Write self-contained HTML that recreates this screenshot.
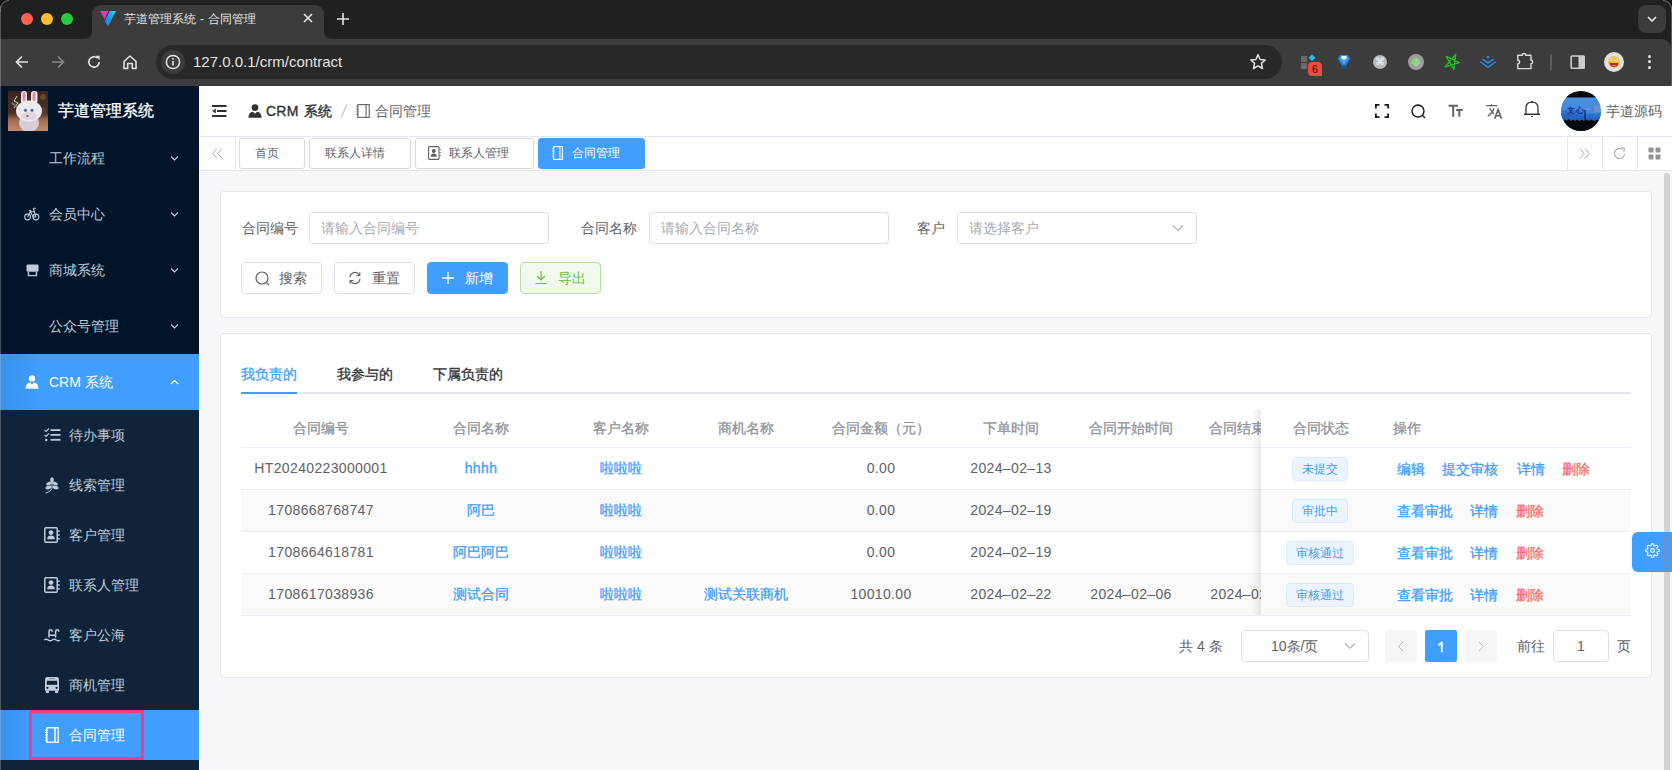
<!DOCTYPE html>
<html><head><meta charset="utf-8">
<style>
*{box-sizing:border-box;margin:0;padding:0}
html,body{width:1672px;height:770px;overflow:hidden;background:#f5f7f9;font-family:"Liberation Sans",sans-serif;position:relative}
.a{position:absolute}
/* browser chrome */
#tabstrip{left:0;top:0;width:1672px;height:39px;background:#1f2020}
#toolbar{left:0;top:39px;width:1672px;height:47px;background:#3c3c3c}
.dot{width:12px;height:12px;border-radius:50%;top:13px}
#tab{left:92px;top:5px;width:232px;height:34px;background:#3c3c3c;border-radius:9px 9px 0 0}
#omni{left:156px;top:45px;width:1126px;height:34px;border-radius:17px;background:#282828}
.ctext{color:#e3e3e3}
/* sidebar */
#sidebar{left:0;top:86px;width:199px;height:684px;background:#001529;overflow:hidden}
.mi{left:0;width:200px;height:56px;color:#bfcbd9;font-size:14px;line-height:56px}
.mi span.t{position:absolute;left:49px;top:0}
.smi{left:0;width:200px;height:50px;color:#bfcbd9;font-size:14px;line-height:50px;background:#0f2438}
.smi span.t{position:absolute;left:69px;top:0}
/* header */
#header{left:199px;top:86px;width:1473px;height:51px;background:#fff;border-bottom:1px solid #e4e7ed}
#tags{left:199px;top:137px;width:1473px;height:34px;background:#fff;border-bottom:1px solid #e4e7ed}
.tag{top:1px;height:31px;border:1px solid #d9d9d9;border-radius:3px;font-size:12px;color:#606266;line-height:28px;background:#fff}
.card{background:#fff;border:1px solid #e4e7ed;border-radius:4px}
.lbl{font-size:14px;color:#606266;line-height:32px}
.inp{height:32px;border:1px solid #dcdfe6;border-radius:4px;font-size:14px;color:#a8abb2;line-height:30px;padding-left:11px;background:#fff}
.btn{height:32px;border:1px solid #dcdfe6;border-radius:4px;font-size:14px;color:#606266;line-height:30px;background:#fff;font-weight:500}
.th{top:409px;height:38px;line-height:38px;font-size:14px;color:#909399;font-weight:500;text-align:center;-webkit-text-stroke:0.3px #909399}
.row{left:241px;width:1390px;height:42px;border-bottom:1px solid #ebeef5}
.td{height:41px;line-height:41px;font-size:14px;color:#606266;text-align:center}
.lnk{color:#409eff;-webkit-text-stroke:0.3px #409eff}
.del{color:#f56c6c;-webkit-text-stroke:0.3px #f56c6c}
.stag{height:24px;line-height:22px;font-size:12px;color:#409eff;background:#ecf5ff;border:1px solid #d9ecff;border-radius:4px;text-align:center}
</style></head>
<body>
<!-- ============ BROWSER CHROME ============ -->
<div id="tabstrip" class="a"></div>
<div id="toolbar" class="a"></div>
<div class="a dot" style="left:21px;background:#fe5f57"></div>
<div class="a dot" style="left:41px;background:#febc2e"></div>
<div class="a dot" style="left:61px;background:#28c840"></div>
<div id="tab" class="a"></div>
<svg class="a" style="left:84px;top:29px" width="8" height="10"><path d="M0 10 Q8 10 8 2 L8 10 Z" fill="#3c3c3c"/></svg>
<svg class="a" style="left:324px;top:29px" width="8" height="10"><path d="M8 10 Q0 10 0 2 L0 10 Z" fill="#3c3c3c"/></svg>
<svg class="a" style="left:100px;top:11px" width="17" height="17" viewBox="0 0 17 17"><defs><linearGradient id="fv" x1="0" y1="1" x2="1" y2="0"><stop offset="0" stop-color="#1c7fe6"/><stop offset="0.5" stop-color="#1a9bef"/><stop offset="1" stop-color="#17dcf7"/></linearGradient></defs><path d="M0 0 H8.3 L4.6 8.2 Z" fill="#e83ab8"/><path d="M9.7 0 H16 L8 15.6 L4.9 9.9 Z" fill="url(#fv)"/></svg>
<div class="a ctext" style="left:124px;top:10px;font-size:12px;line-height:18px;letter-spacing:0.1px">芋道管理系统 - 合同管理</div>
<svg class="a" style="left:303px;top:13px" width="10" height="10"><path d="M1 1 L9 9 M9 1 L1 9" stroke="#e3e3e3" stroke-width="1.6"/></svg>
<svg class="a" style="left:337px;top:13px" width="12" height="12"><path d="M6 0 V12 M0 6 H12" stroke="#e3e3e3" stroke-width="1.6"/></svg>
<svg class="a" style="left:15px;top:55px" width="14" height="14" viewBox="0 0 14 14"><path d="M13 7 H2 M7 1.5 L1.5 7 L7 12.5" stroke="#e3e3e3" stroke-width="1.7" fill="none"/></svg>
<svg class="a" style="left:51px;top:55px" width="14" height="14" viewBox="0 0 14 14"><path d="M1 7 H12 M7 1.5 L12.5 7 L7 12.5" stroke="#8a8a8a" stroke-width="1.7" fill="none"/></svg>
<svg class="a" style="left:87px;top:55px" width="14" height="14" viewBox="0 0 14 14"><path d="M12.2 7 A5.2 5.2 0 1 1 10.6 3.2" stroke="#e3e3e3" stroke-width="1.7" fill="none"/><path d="M8.3 0.8 L12.6 0.8 L12.6 5.1 Z" fill="#e3e3e3"/></svg>
<svg class="a" style="left:122px;top:54px" width="16" height="16" viewBox="0 0 16 16"><path d="M2 7.5 L8 2 L14 7.5 V14.5 H10.3 V9.5 H5.7 V14.5 H2 Z" stroke="#e3e3e3" stroke-width="1.6" fill="none" stroke-linejoin="round"/></svg>

<div id="omni" class="a"></div>
<div class="a ctext" style="left:193px;top:52px;font-size:15px;line-height:20px">127.0.0.1/crm/contract</div>
<div class="a" style="left:161px;top:50px;width:24px;height:24px;border-radius:50%;background:#3c3c3c"></div>
<svg class="a" style="left:165px;top:54px" width="16" height="16" viewBox="0 0 16 16"><circle cx="8" cy="8" r="6.6" stroke="#e3e3e3" stroke-width="1.5" fill="none"/><rect x="7.2" y="7" width="1.6" height="4.6" fill="#e3e3e3"/><circle cx="8" cy="4.9" r="0.95" fill="#e3e3e3"/></svg>
<svg class="a" style="left:1249px;top:53px" width="18" height="18" viewBox="0 0 18 18"><path d="M9 1.8 L11.1 6.5 L16.2 7 L12.4 10.4 L13.5 15.5 L9 12.9 L4.5 15.5 L5.6 10.4 L1.8 7 L6.9 6.5 Z" stroke="#e3e3e3" stroke-width="1.5" fill="none" stroke-linejoin="round"/></svg>


<!-- EXTENSIONS -->
<div class="a" style="left:1301px;top:56px;width:6px;height:5.5px;background:#6a6a6a;border-radius:1px"></div>
<div class="a" style="left:1301px;top:63px;width:6px;height:5.5px;background:#6a6a6a;border-radius:1px"></div>
<svg class="a" style="left:1308px;top:54px" width="8" height="8"><path d="M4 0.5 L7.5 3.8 L4 7 L0.5 3.8 Z" fill="#19c2f5"/></svg>
<div class="a" style="left:1308px;top:62px;width:14px;height:14px;background:#ee4b3a;border-radius:4px 4px 0 4px;color:#1a1a1a;font-size:10.5px;line-height:15px;text-align:center">6</div>
<svg class="a" style="left:1337px;top:54px" width="14" height="16" viewBox="0 0 14 16"><path d="M3 1 H11 L13.5 4.5 L7 15.5 L0.5 4.5 Z" fill="#1f6fd6"/><path d="M4 1.5 H10 L12 4.5 L7 11 L2 4.5 Z" fill="#4aa3f5"/><path d="M5 2 H9 L10 4 L7 6 L4 4 Z" fill="#e6f4ff"/><path d="M7 11 L7 15.5" stroke="#0c3d80" stroke-width="1.2"/></svg>
<div class="a" style="left:1373px;top:55px;width:14px;height:14px;border-radius:50%;background:#b8b8b8;color:#f4f4f4;font-size:10px;line-height:14px;text-align:center">⌘</div>
<div class="a" style="left:1408px;top:54px;width:16px;height:16px;border-radius:50%;background:#9e9e9e"></div>
<div class="a" style="left:1412px;top:58px;width:8px;height:8px;border-radius:50%;background:#8fd48a"></div>
<svg class="a" style="left:1436px;top:48px" width="100" height="28" viewBox="0 0 100 28">
<path d="M19.7 6.3 L9 18.8 L23.6 14.6 L10.2 8.4 L17.9 21.5 Z" stroke="#1fc41f" stroke-width="1.3" fill="none" stroke-linejoin="round"/>
<circle cx="52" cy="9" r="1.3" fill="#2d8cf0"/>
<path d="M47.2 11.4 L52 15 L56.8 11.4" stroke="#2d8cf0" stroke-width="1.5" fill="none" stroke-linecap="round"/>
<path d="M44.6 14 L52 19.4 L59.5 14" stroke="#2d8cf0" stroke-width="1.5" fill="none" stroke-linecap="round"/>
<path d="M81.8 7.2 H86.3 A1.7 1.7 0 0 1 89.7 7.2 H95 V12.3 A1.7 1.7 0 0 1 95 15.7 V20.6 H81.8 V15.8 A1.8 1.8 0 0 0 81.8 12.2 Z" stroke="#dcdcdc" stroke-width="1.4" fill="none" stroke-linejoin="round"/>
</svg>
<div class="a" style="left:1550px;top:54px;width:2px;height:16px;background:#5c5c5c"></div>
<svg class="a" style="left:1570px;top:55px" width="16" height="14" viewBox="0 0 16 14"><rect x="1.2" y="1" width="13" height="12.2" rx="0.8" stroke="#cdcdcd" stroke-width="1.6" fill="none"/><rect x="8.5" y="1" width="5.8" height="12" fill="#cdcdcd"/></svg>
<div class="a" style="left:1604px;top:52px;width:20px;height:20px;border-radius:50%;background:#e0e0e0"></div>
<svg class="a" style="left:1607px;top:55px" width="14" height="14" viewBox="0 0 14 14"><circle cx="7" cy="7" r="6" fill="#f2c443"/><path d="M2.5 7.5 Q7 8.5 11.5 7.5 Q11 12 7 12 Q3 12 2.5 7.5 Z" fill="#c0262e"/><path d="M4.5 10 Q7 12.5 9.5 10" fill="#e87a8a"/><circle cx="5" cy="4.6" r="1.2" fill="#fff"/><circle cx="9.2" cy="4.6" r="1.2" fill="#fff"/><circle cx="5.2" cy="4.8" r="0.5" fill="#333"/><circle cx="9.0" cy="4.8" r="0.5" fill="#333"/></svg>
<div class="a" style="left:1648.2px;top:54.8px;width:3px;height:3px;border-radius:50%;background:#e3e3e3"></div>
<div class="a" style="left:1648.2px;top:60.3px;width:3px;height:3px;border-radius:50%;background:#e3e3e3"></div>
<div class="a" style="left:1648.2px;top:65.8px;width:3px;height:3px;border-radius:50%;background:#e3e3e3"></div>
<div class="a" style="left:1638px;top:5px;width:28px;height:28px;border-radius:8px;background:#3c3c3c"></div>
<svg class="a" style="left:1647px;top:15.5px" width="10" height="7"><path d="M1 1 L5 5 L9 1" stroke="#e3e3e3" stroke-width="1.7" fill="none"/></svg><svg class="a" style="left:1662px;top:39px" width="10" height="10"><path d="M10 0 H0 A9 9 0 0 1 9 9 H10 Z" fill="#1f2020"/></svg>

<!-- ============ SIDEBAR ============ -->
<div id="sidebar" class="a">
  <svg class="a" style="left:8px;top:5px" width="40" height="40" viewBox="0 0 40 40">
<defs><linearGradient id="flr" x1="0" y1="0" x2="0" y2="1"><stop offset="0" stop-color="#3a2620"/><stop offset="0.55" stop-color="#4a3026"/><stop offset="0.72" stop-color="#9c6b52"/><stop offset="1" stop-color="#c28c6a"/></linearGradient></defs>
<rect width="40" height="40" fill="url(#flr)"/>
<circle cx="35" cy="6" r="3" fill="#6a4632"/><circle cx="34" cy="20" r="4" fill="#5c3c2c"/>
<path d="M9 5 L6 10 L10 12 L6 17" stroke="#d8d8d8" stroke-width="1" fill="none"/>
<path d="M4 12 L9 16" stroke="#777" stroke-width="2"/>
<rect x="13" y="0" width="6" height="13" rx="3" fill="#eee"/><rect x="14.5" y="1" width="3" height="9" rx="1.5" fill="#e38fa0"/>
<rect x="23" y="0" width="6.5" height="13" rx="3" fill="#eee"/><rect x="24.5" y="1" width="3" height="9" rx="1.5" fill="#e38fa0"/>
<ellipse cx="21" cy="32" rx="10" ry="9" fill="#d8cdd2"/>
<ellipse cx="21" cy="20" rx="13" ry="10.5" fill="#eceaee"/>
<ellipse cx="21" cy="25" rx="8" ry="4" fill="#e2d6da"/>
<circle cx="17.5" cy="19.3" r="1.6" fill="#4a70b0"/><circle cx="24" cy="19.3" r="1.6" fill="#4a70b0"/>
<ellipse cx="19.5" cy="25" rx="1.2" ry="1" fill="#9c5a5a"/>
</svg>
  <div class="a" style="left:58px;top:14px;font-size:16px;font-weight:500;color:#fff;line-height:22px;-webkit-text-stroke:0.3px #fff">芋道管理系统</div>
  <div class="a mi" style="top:44px"><span class="t">工作流程</span></div>
  <div class="a mi" style="top:100px"><span class="t">会员中心</span></div>
  <div class="a mi" style="top:156px"><span class="t">商城系统</span></div>
  <div class="a mi" style="top:212px"><span class="t">公众号管理</span></div>
  <div class="a mi" style="top:268px;background:#409eff;color:#fff"><span class="t">CRM 系统</span></div>
  <div class="a smi" style="top:324px"><span class="t">待办事项</span></div>
  <div class="a smi" style="top:374px"><span class="t">线索管理</span></div>
  <div class="a smi" style="top:424px"><span class="t">客户管理</span></div>
  <div class="a smi" style="top:474px"><span class="t">联系人管理</span></div>
  <div class="a smi" style="top:524px"><span class="t">客户公海</span></div>
  <div class="a smi" style="top:574px"><span class="t">商机管理</span></div>
  <div class="a smi" style="top:624px;background:#409eff;color:#fff"><span class="t">合同管理</span></div>
  <div class="a smi" style="top:674px"></div>
<svg class="a" style="left:24px;top:121px" width="16" height="14" viewBox="0 0 16 14"><circle cx="3.6" cy="10" r="2.9" stroke="#bfcbd9" stroke-width="1.1" fill="none"/><circle cx="11.9" cy="10" r="2.9" stroke="#bfcbd9" stroke-width="1.1" fill="none"/><path d="M3.6 10 L6.3 4.8 L9.3 10 H11.9 M6.3 4.8 H10.4 L11.9 10 M10.4 4.8 L9.3 1.2 H11.6 M5 3.6 H7.3" stroke="#bfcbd9" stroke-width="1.1" fill="none" stroke-linejoin="round"/></svg>
<svg class="a" style="left:170px;top:124.5px" width="9" height="7"><path d="M1 1.5 L4.5 5 L8 1.5" stroke="#bfcbd9" stroke-width="1.1" fill="none"/></svg>
<svg class="a" style="left:25.5px;top:178px" width="13" height="13" viewBox="0 0 13 13"><path d="M1.5 0.5 H11.5 Q12.5 0.5 12.5 1.5 V6.5 Q12.5 7.8 11 7.8 H2 Q0.5 7.8 0.5 6.5 V1.5 Q0.5 0.5 1.5 0.5 Z" fill="#bfcbd9"/><path d="M2.5 8 V11.6 H10.5 V8" stroke="#bfcbd9" stroke-width="1.4" fill="none"/></svg>
<svg class="a" style="left:170px;top:180.5px" width="9" height="7"><path d="M1 1.5 L4.5 5 L8 1.5" stroke="#bfcbd9" stroke-width="1.1" fill="none"/></svg>
<svg class="a" style="left:170px;top:68.5px" width="9" height="7"><path d="M1 1.5 L4.5 5 L8 1.5" stroke="#bfcbd9" stroke-width="1.1" fill="none"/></svg>
<svg class="a" style="left:170px;top:236.5px" width="9" height="7"><path d="M1 1.5 L4.5 5 L8 1.5" stroke="#bfcbd9" stroke-width="1.1" fill="none"/></svg>
<svg class="a" style="left:25px;top:289px" width="14" height="14" viewBox="0 0 14 14"><circle cx="7" cy="3.5" r="3.2" fill="#fff"/><path d="M0.5 13.8 Q0.8 8.2 5 7.6 L7 9.6 L9 7.6 Q13.2 8.2 13.5 13.8 Z" fill="#fff"/></svg>
<svg class="a" style="left:170px;top:292.5px" width="9" height="7"><path d="M1 5 L4.5 1.5 L8 5" stroke="#fff" stroke-width="1.1" fill="none"/></svg>
<svg class="a" style="left:44px;top:342px" width="17" height="14" viewBox="0 0 17 14"><path d="M0.5 2 L2 3.5 L5 0.5 M0.5 6.8 L2 8.3 L5 5.3" stroke="#bfcbd9" stroke-width="1.2" fill="none"/><circle cx="2.2" cy="12" r="1.3" fill="#bfcbd9"/><rect x="6.5" y="1.2" width="10" height="1.8" fill="#bfcbd9"/><rect x="6.5" y="6" width="10" height="1.8" fill="#bfcbd9"/><rect x="6.5" y="10.9" width="10" height="1.8" fill="#bfcbd9"/></svg>
<svg class="a" style="left:45px;top:391px" width="14" height="17" viewBox="0 0 14 17"><ellipse cx="7" cy="2.8" rx="1.8" ry="2.6" fill="#bfcbd9"/><ellipse cx="4" cy="6.5" rx="3" ry="1.6" transform="rotate(-20 4 6.5)" fill="#bfcbd9"/><ellipse cx="10" cy="6.5" rx="3" ry="1.6" transform="rotate(20 10 6.5)" fill="#bfcbd9"/><ellipse cx="3.5" cy="10.5" rx="3.2" ry="1.7" transform="rotate(-15 3.5 10.5)" fill="#bfcbd9"/><ellipse cx="10.5" cy="10.5" rx="3.2" ry="1.7" transform="rotate(15 10.5 10.5)" fill="#bfcbd9"/><path d="M7 4 V11.5 Q6 14.5 0.5 16.2" stroke="#bfcbd9" stroke-width="1" fill="none"/></svg>
<svg class="a" style="left:44px;top:441px" width="16" height="16" viewBox="0 0 16 16"><rect x="0.8" y="0.8" width="12.4" height="14.4" rx="1" stroke="#bfcbd9" stroke-width="1.5" fill="none"/><circle cx="7" cy="5.6" r="2.4" fill="#bfcbd9"/><path d="M3.2 12.2 Q3.2 8.6 7 8.6 Q10.8 8.6 10.8 12.2 Z" fill="#bfcbd9"/><rect x="13.8" y="3.5" width="2" height="1.4" fill="#bfcbd9"/><rect x="13.8" y="7.3" width="2" height="1.4" fill="#bfcbd9"/><rect x="13.8" y="11.1" width="2" height="1.4" fill="#bfcbd9"/></svg>
<svg class="a" style="left:44px;top:491px" width="16" height="16" viewBox="0 0 16 16"><rect x="0.8" y="0.8" width="12.4" height="14.4" rx="1" stroke="#bfcbd9" stroke-width="1.5" fill="none"/><circle cx="7" cy="5.6" r="2.4" fill="#bfcbd9"/><path d="M3.2 12.2 Q3.2 8.6 7 8.6 Q10.8 8.6 10.8 12.2 Z" fill="#bfcbd9"/><rect x="13.8" y="3.5" width="2" height="1.4" fill="#bfcbd9"/><rect x="13.8" y="7.3" width="2" height="1.4" fill="#bfcbd9"/><rect x="13.8" y="11.1" width="2" height="1.4" fill="#bfcbd9"/></svg>
<svg class="a" style="left:40px;top:538px" width="24" height="22" viewBox="0 0 24 22"><path d="M9 13.5 V8 Q9 5.8 10.6 5.8 Q12.2 5.8 12.2 7.8 M15.6 13.5 V8 Q15.6 5.8 17.2 5.8 Q18.8 5.8 18.8 7.8 M9 11.2 H15.6" stroke="#bfcbd9" stroke-width="1.5" fill="none"/><path d="M4.2 16 Q6.2 14.6 8.2 16 Q10.2 17.4 12.2 16 Q14.2 14.6 16.2 16 Q18.2 17.4 20 16" stroke="#bfcbd9" stroke-width="1.5" fill="none"/></svg>
<svg class="a" style="left:40px;top:586px" width="24" height="26" viewBox="0 0 24 26"><path d="M7 5 H17 Q19 5 19 7.5 V18.8 H5 V7.5 Q5 5 7 5 Z" fill="#bfcbd9"/><rect x="6.8" y="8.8" width="10.4" height="4" fill="#112035"/><rect x="9" y="6.2" width="6" height="0.9" fill="#8090a0"/><circle cx="7.4" cy="15.8" r="1.1" fill="#112035"/><circle cx="16.6" cy="15.8" r="1.1" fill="#112035"/><path d="M5.8 18.5 H9 V20.2 Q9 21.2 7.4 21.2 Q5.8 21.2 5.8 20.2 Z M15 18.5 H18.2 V20.2 Q18.2 21.2 16.6 21.2 Q15 21.2 15 20.2 Z" fill="#bfcbd9"/></svg>
<svg class="a" style="left:45px;top:641px" width="14" height="16" viewBox="0 0 14 16"><rect x="1.8" y="0.8" width="11.4" height="14.4" stroke="#fff" stroke-width="1.3" fill="none"/><rect x="9.3" y="1" width="1.4" height="14" fill="#fff"/><path d="M0 3 H2.5 M0 5.5 H2.5 M0 8 H2.5 M0 10.5 H2.5 M0 13 H2.5" stroke="#fff" stroke-width="1"/></svg>
<div class="a" style="left:29px;top:624px;width:115px;height:50px;border:3px solid #f53d7a"></div>
<div class="a" style="left:0;top:268px;width:40px;height:56px;background:linear-gradient(to right,rgba(0,40,90,0.12),rgba(0,40,90,0))"></div>
<div class="a" style="left:0;top:624px;width:29px;height:50px;background:linear-gradient(to right,rgba(0,40,90,0.12),rgba(0,40,90,0.02))"></div>
</div>

<!-- ============ HEADER ============ -->
<div id="header" class="a"></div>
<div class="a" style="left:266px;top:100px;font-size:14px;line-height:22px;color:#303133;font-weight:500;-webkit-text-stroke:0.35px #303133;letter-spacing:0.25px;word-spacing:1px">CRM 系统</div>
<svg class="a" style="left:339px;top:103px" width="10" height="16"><path d="M7.8 1.5 L2.2 14.5" stroke="#c0c4cc" stroke-width="1.3"/></svg>
<div class="a" style="left:375px;top:100px;font-size:14px;line-height:22px;color:#606266">合同管理</div>
<div class="a" style="left:1606px;top:100px;font-size:14px;line-height:22px;color:#606266">芋道源码</div>

<!-- ============ TAGS VIEW ============ -->
<div id="tags" class="a">
  <div class="a tag" style="left:40px;width:66px;padding-left:15px">首页</div>
  <div class="a tag" style="left:110px;width:102px;padding-left:15px">联系人详情</div>
  <div class="a tag" style="left:216px;width:119px;padding-left:33px">联系人管理</div>
  <div class="a tag" style="left:339px;width:107px;padding-left:33px;background:#409eff;border-color:#409eff;color:#fff">合同管理</div>
</div>

<!-- header icons -->
<svg class="a" style="left:212px;top:105px" width="15" height="12" viewBox="0 0 15 12"><rect x="0" y="0" width="14.5" height="2" fill="#303133"/><rect x="5" y="5" width="9.5" height="2" fill="#303133"/><rect x="0" y="10" width="14.5" height="2" fill="#303133"/><path d="M0.3 6 L3.8 3.5 V8.5 Z" fill="#303133"/></svg>
<svg class="a" style="left:248px;top:104px" width="14" height="14" viewBox="0 0 14 14"><circle cx="7" cy="3.6" r="3.4" fill="#303133"/><path d="M0.3 13.8 Q0.6 8.3 5 7.7 L7 9.8 L9 7.7 Q13.4 8.3 13.7 13.8 Z" fill="#303133"/></svg>
<svg class="a" style="left:356px;top:104px" width="14" height="14" viewBox="0 0 14 14"><rect x="1.8" y="0.6" width="11.4" height="12.8" stroke="#606266" stroke-width="1.1" fill="none"/><rect x="9.5" y="0.8" width="1.1" height="12.5" fill="#606266"/><path d="M0.3 2.8 H2.6 M0.3 5.3 H2.6 M0.3 7.8 H2.6 M0.3 10.3 H2.6" stroke="#606266" stroke-width="0.9"/></svg>
<svg class="a" style="left:1375px;top:104px" width="14" height="14" viewBox="0 0 14 14"><path d="M0.9 4.5 V0.9 H4.5 M9.5 0.9 H13.1 V4.5 M13.1 9.5 V13.1 H9.5 M4.5 13.1 H0.9 V9.5" stroke="#1a1a1a" stroke-width="1.8" fill="none"/></svg>
<svg class="a" style="left:1411px;top:104px" width="15" height="15" viewBox="0 0 15 15"><circle cx="7" cy="7" r="6" stroke="#1a1a1a" stroke-width="1.4" fill="none"/><path d="M11.2 11.2 L14 14" stroke="#1a1a1a" stroke-width="1.4"/></svg>
<svg class="a" style="left:1446px;top:102px" width="20" height="18" viewBox="0 0 20 18"><path d="M2.5 3.7 H11.9 M7.2 3.7 V14.7 M10.2 7.9 H16.7 M13.3 7.9 V14.7" stroke="#606266" stroke-width="2" fill="none"/></svg>
<svg class="a" style="left:1484px;top:102px" width="20" height="18" viewBox="0 0 20 18"><path d="M2.2 3.6 H13.2 M7.6 2.2 V3.6 M5.6 6.2 L9.7 12.2 M10 6.2 Q8.5 11.5 3.7 14.1" stroke="#606266" stroke-width="1.3" fill="none"/><path d="M10.8 16.6 L14.1 7.6 L17.4 16.6 M11.8 13.8 H16.4" stroke="#606266" stroke-width="1.6" fill="none"/></svg>
<svg class="a" style="left:1522px;top:100px" width="20" height="19" viewBox="0 0 20 19"><path d="M4 14.2 V8 Q4 2.1 10 2.1 Q16 2.1 16 8 V14.2" stroke="#303133" stroke-width="1.3" fill="none"/><path d="M2 14.3 H18" stroke="#303133" stroke-width="1.5"/><circle cx="10" cy="2" r="1" fill="#303133"/><rect x="9.2" y="16" width="1.6" height="1" fill="#303133"/></svg>
<svg class="a" style="left:1561px;top:91px" width="40" height="40" viewBox="0 0 40 40">
<defs><clipPath id="avc"><circle cx="20" cy="20" r="20"/></clipPath><linearGradient id="avg" x1="0" y1="0" x2="0" y2="1"><stop offset="0" stop-color="#4d93e3"/><stop offset="0.6" stop-color="#3f86dc"/><stop offset="1" stop-color="#2a66c4"/></linearGradient></defs>
<g clip-path="url(#avc)">
<rect width="40" height="40" fill="url(#avg)"/>
<rect width="40" height="6.5" fill="#0a0a0c"/>
<path d="M0 20 Q10 17 20 21 Q30 25 40 21 V28 H0 Z" fill="#2f70cf"/>
<path d="M0 24 Q12 21 22 25 Q32 28 40 25 V30 H0 Z" fill="#2563c0"/>
<text x="5.5" y="21.5" font-size="7.5" font-weight="bold" fill="#1c2f86" font-family="Liberation Sans, sans-serif">文</text>
<text x="14.5" y="21.5" font-size="7.5" font-weight="bold" fill="#1c2f86" font-family="Liberation Sans, sans-serif">心</text>
<rect x="24" y="17.5" width="6" height="1" fill="#7a9ad0"/>
<rect x="33" y="14.5" width="6" height="7" fill="#6f8fc4"/>
<rect x="23.5" y="19" width="1.1" height="11" fill="#0c1a3a"/>
<path d="M0 31 L3 30.5 L4 28.5 L6 29.5 L8 28 L10 30 L12 28.5 L14 30 L16 28.5 L18 30 L21 28.8 L23 30 L26 28.5 L28 30 L30 28.5 L33 30 L36 28.8 L40 30 V40 H0 Z" fill="#08090f"/>
</g></svg>
<svg class="a" style="left:428px;top:146px" width="13" height="14" viewBox="0 0 13 14"><rect x="0.6" y="0.6" width="10.4" height="12.8" rx="1" stroke="#606266" stroke-width="1.1" fill="none"/><circle cx="5.8" cy="5" r="2" fill="#606266"/><path d="M2.8 10.8 Q2.8 7.6 5.8 7.6 Q8.8 7.6 8.8 10.8 Z" fill="#606266"/><path d="M11.5 3.5 H12.8 M11.5 6.5 H12.8 M11.5 9.5 H12.8" stroke="#606266" stroke-width="1"/></svg>
<svg class="a" style="left:552px;top:146px" width="11" height="14" viewBox="0 0 11 14"><rect x="1.6" y="0.6" width="8.8" height="12.8" stroke="#fff" stroke-width="1.1" fill="none"/><rect x="7.4" y="0.8" width="1" height="12.5" fill="#fff"/><path d="M0.2 2.8 H2.2 M0.2 5.3 H2.2 M0.2 7.8 H2.2 M0.2 10.3 H2.2" stroke="#fff" stroke-width="0.9"/></svg>
<svg class="a" style="left:212px;top:148px" width="11" height="11" viewBox="0 0 11 11"><path d="M5 0.5 L0.8 5.5 L5 10.5 M10 0.5 L5.8 5.5 L10 10.5" stroke="#a8abb2" stroke-width="1" fill="none"/></svg>
<div class="a" style="left:235px;top:137px;width:1px;height:33px;background:#e4e7ed"></div>
<div class="a" style="left:1567px;top:137px;width:1px;height:33px;background:#e4e7ed"></div>
<div class="a" style="left:1602px;top:137px;width:1px;height:33px;background:#e4e7ed"></div>
<div class="a" style="left:1637px;top:137px;width:1px;height:33px;background:#e4e7ed"></div>
<svg class="a" style="left:1579px;top:148px" width="11" height="11" viewBox="0 0 11 11"><path d="M1 0.5 L5.2 5.5 L1 10.5 M6 0.5 L10.2 5.5 L6 10.5" stroke="#a8abb2" stroke-width="1" fill="none"/></svg>
<svg class="a" style="left:1613px;top:147px" width="13" height="13" viewBox="0 0 13 13"><path d="M11.5 6.5 A5 5 0 1 1 9.5 2.5" stroke="#a8abb2" stroke-width="1.1" fill="none"/><path d="M7.8 0.8 L11.5 1.2 L10.8 4.8" stroke="#a8abb2" stroke-width="1.1" fill="none"/></svg>
<svg class="a" style="left:1648px;top:147px" width="13" height="13" viewBox="0 0 13 13"><rect x="0.5" y="0.5" width="5" height="5" rx="1" fill="#909399"/><rect x="7.5" y="0.5" width="5" height="5" rx="1" fill="#909399"/><rect x="0.5" y="7.5" width="5" height="5" rx="1" fill="#909399"/><rect x="7.5" y="7.5" width="5" height="5" rx="1" fill="#909399"/></svg>

<!-- ============ SEARCH CARD ============ -->
<div class="a card" style="left:220px;top:191px;width:1432px;height:127px"></div>
<div class="a lbl" style="left:242px;top:212px">合同编号</div>
<div class="a inp" style="left:309px;top:212px;width:240px">请输入合同编号</div>
<div class="a lbl" style="left:581px;top:212px">合同名称</div>
<div class="a inp" style="left:649px;top:212px;width:240px">请输入合同名称</div>
<div class="a lbl" style="left:917px;top:212px">客户</div>
<div class="a inp" style="left:957px;top:212px;width:240px">请选择客户</div>

<div class="a btn" style="left:241px;top:262px;width:81px;padding-left:37px">搜索</div>
<div class="a btn" style="left:334px;top:262px;width:81px;padding-left:37px">重置</div>
<div class="a btn" style="left:427px;top:262px;width:81px;padding-left:37px;background:#409eff;border-color:#409eff;color:#fff">新增</div>
<div class="a btn" style="left:520px;top:262px;width:81px;padding-left:37px;background:#f0f9eb;border-color:#b3e19d;color:#67c23a">导出</div>

<!-- ============ TABLE CARD ============ -->
<div class="a card" style="left:220px;top:333px;width:1432px;height:345px"></div>
<div class="a" style="left:241px;top:364px;font-size:14px;line-height:20px;color:#409eff;font-weight:500;-webkit-text-stroke:0.3px #409eff">我负责的</div>
<div class="a" style="left:337px;top:364px;font-size:14px;line-height:20px;color:#303133;font-weight:500;-webkit-text-stroke:0.3px #303133">我参与的</div>
<div class="a" style="left:433px;top:364px;font-size:14px;line-height:20px;color:#303133;font-weight:500;-webkit-text-stroke:0.3px #303133">下属负责的</div>
<div class="a" style="left:241px;top:392px;width:1390px;height:2px;background:#e4e7ed"></div>
<div class="a" style="left:241px;top:392px;width:56px;height:2px;background:#409eff"></div>

<!-- TABLE -->
<div class="a" style="left:241px;top:447px;width:1390px;height:1px;background:#ebeef5"></div>
<div class="a th" style="left:241px;width:160px">合同编号</div>
<div class="a th" style="left:401px;width:160px">合同名称</div>
<div class="a th" style="left:561px;width:120px">客户名称</div>
<div class="a th" style="left:681px;width:130px">商机名称</div>
<div class="a th" style="left:811px;width:140px">合同金额（元）</div>
<div class="a th" style="left:951px;width:120px">下单时间</div>
<div class="a th" style="left:1071px;width:120px">合同开始时间</div>
<div class="a th" style="left:1191px;width:120px">合同结束时间</div>
<div class="a row" style="top:448px;background:#fff"></div>
<div class="a td" style="left:241px;top:448px;width:160px;letter-spacing:0.35px">HT20240223000001</div>
<div class="a td lnk" style="left:401px;top:448px;width:160px;letter-spacing:0.35px">hhhh</div>
<div class="a td lnk" style="left:561px;top:448px;width:120px">啦啦啦</div>
<div class="a td" style="left:811px;top:448px;width:140px;letter-spacing:0.35px">0.00</div>
<div class="a td" style="left:951px;top:448px;width:120px;letter-spacing:0.35px">2024–02–13</div>
<div class="a row" style="top:490px;background:#fafafa"></div>
<div class="a td" style="left:241px;top:490px;width:160px;letter-spacing:0.35px">1708668768747</div>
<div class="a td lnk" style="left:401px;top:490px;width:160px">阿巴</div>
<div class="a td lnk" style="left:561px;top:490px;width:120px">啦啦啦</div>
<div class="a td" style="left:811px;top:490px;width:140px;letter-spacing:0.35px">0.00</div>
<div class="a td" style="left:951px;top:490px;width:120px;letter-spacing:0.35px">2024–02–19</div>
<div class="a row" style="top:532px;background:#fff"></div>
<div class="a td" style="left:241px;top:532px;width:160px;letter-spacing:0.35px">1708664618781</div>
<div class="a td lnk" style="left:401px;top:532px;width:160px">阿巴阿巴</div>
<div class="a td lnk" style="left:561px;top:532px;width:120px">啦啦啦</div>
<div class="a td" style="left:811px;top:532px;width:140px;letter-spacing:0.35px">0.00</div>
<div class="a td" style="left:951px;top:532px;width:120px;letter-spacing:0.35px">2024–02–19</div>
<div class="a row" style="top:574px;background:#fafafa"></div>
<div class="a td" style="left:241px;top:574px;width:160px;letter-spacing:0.35px">1708617038936</div>
<div class="a td lnk" style="left:401px;top:574px;width:160px">测试合同</div>
<div class="a td lnk" style="left:561px;top:574px;width:120px">啦啦啦</div>
<div class="a td lnk" style="left:681px;top:574px;width:130px">测试关联商机</div>
<div class="a td" style="left:811px;top:574px;width:140px;letter-spacing:0.35px">10010.00</div>
<div class="a td" style="left:951px;top:574px;width:120px;letter-spacing:0.35px">2024–02–22</div>
<div class="a td" style="left:1071px;top:574px;width:120px;letter-spacing:0.35px">2024–02–06</div>
<div class="a td" style="left:1191px;top:574px;width:120px;letter-spacing:0.35px">2024–02–06</div>
<!-- FIXED RIGHT -->
<div class="a" style="left:1251px;top:409px;width:10px;height:206px;background:linear-gradient(to right,rgba(0,0,0,0),rgba(0,0,0,0.08))"></div>
<div class="a" style="left:1261px;top:409px;width:370px;height:39px;background:#fff;border-bottom:1px solid #ebeef5"></div>
<div class="a th" style="left:1261px;width:120px">合同状态</div>
<div class="a th" style="left:1393px;text-align:left">操作</div>
<div class="a" style="left:1261px;top:448px;width:370px;height:42px;background:#fff;border-bottom:1px solid #ebeef5"></div>
<div class="a stag" style="left:1292px;top:457px;width:56px">未提交</div>
<div class="a td lnk" style="left:1397px;top:449px;font-weight:500">编辑</div>
<div class="a td lnk" style="left:1442px;top:449px;font-weight:500">提交审核</div>
<div class="a td lnk" style="left:1517px;top:449px;font-weight:500">详情</div>
<div class="a td del" style="left:1562px;top:449px;font-weight:500">删除</div>
<div class="a" style="left:1261px;top:490px;width:370px;height:42px;background:#fafafa;border-bottom:1px solid #ebeef5"></div>
<div class="a stag" style="left:1292px;top:499px;width:56px">审批中</div>
<div class="a td lnk" style="left:1397px;top:491px;font-weight:500">查看审批</div>
<div class="a td lnk" style="left:1470px;top:491px;font-weight:500">详情</div>
<div class="a td del" style="left:1516px;top:491px;font-weight:500">删除</div>
<div class="a" style="left:1261px;top:532px;width:370px;height:42px;background:#fff;border-bottom:1px solid #ebeef5"></div>
<div class="a stag" style="left:1286px;top:541px;width:68px">审核通过</div>
<div class="a td lnk" style="left:1397px;top:533px;font-weight:500">查看审批</div>
<div class="a td lnk" style="left:1470px;top:533px;font-weight:500">详情</div>
<div class="a td del" style="left:1516px;top:533px;font-weight:500">删除</div>
<div class="a" style="left:1261px;top:574px;width:370px;height:42px;background:#fafafa;border-bottom:1px solid #ebeef5"></div>
<div class="a stag" style="left:1286px;top:583px;width:68px">审核通过</div>
<div class="a td lnk" style="left:1397px;top:575px;font-weight:500">查看审批</div>
<div class="a td lnk" style="left:1470px;top:575px;font-weight:500">详情</div>
<div class="a td del" style="left:1516px;top:575px;font-weight:500">删除</div>
<!-- PAGINATION -->
<div class="a" style="left:1179px;top:630px;font-size:14px;line-height:32px;color:#606266">共 4 条</div>
<div class="a inp" style="left:1241px;top:630px;width:128px;color:#606266;padding-left:29px">10条/页</div>
<div class="a" style="left:1385px;top:630px;width:32px;height:32px;background:#f4f5f7;border-radius:2px"></div>
<div class="a" style="left:1425px;top:630px;width:32px;height:32px;background:#409eff;border-radius:2px;color:#fff;font-size:14px;line-height:32px;text-align:center"><svg width="32" height="32" style="position:absolute;left:0;top:0"><path d="M13.4 15.2 L16.8 12.4 V22.3" stroke="#fff" stroke-width="1.8" fill="none" stroke-linejoin="round"/></svg></div>
<div class="a" style="left:1465px;top:630px;width:32px;height:32px;background:#f4f5f7;border-radius:2px"></div>
<div class="a" style="left:1517px;top:630px;font-size:14px;line-height:32px;color:#606266">前往</div>
<div class="a inp" style="left:1553px;top:630px;width:56px;color:#606266;text-align:center;padding:0">1</div>
<div class="a" style="left:1617px;top:630px;font-size:14px;line-height:32px;color:#606266">页</div>
<!-- SCROLLBAR + SETTINGS -->
<div class="a" style="left:1632px;top:532px;width:40px;height:40px;background:#409eff;border-radius:6px 0 0 6px"></div>
<!-- button icons -->
<svg class="a" style="left:255px;top:271px" width="15" height="15" viewBox="0 0 15 15"><circle cx="7" cy="7" r="6" stroke="#606266" stroke-width="1.2" fill="none"/><path d="M11.3 11.3 L14 14" stroke="#606266" stroke-width="1.2"/></svg>
<svg class="a" style="left:348px;top:271px" width="14" height="14" viewBox="0 0 14 14"><path d="M2 6 A5 5 0 0 1 11.2 3.8 M12 8 A5 5 0 0 1 2.8 10.2" stroke="#606266" stroke-width="1.2" fill="none"/><path d="M11.8 1.2 V4.5 H8.5 M2.2 12.8 V9.5 H5.5" stroke="#606266" stroke-width="1.2" fill="none"/></svg>
<svg class="a" style="left:441px;top:271px" width="14" height="14" viewBox="0 0 14 14"><path d="M7 1 V13 M1 7 H13" stroke="#fff" stroke-width="1.3"/></svg>
<svg class="a" style="left:534px;top:270px" width="14" height="15" viewBox="0 0 14 15"><path d="M7 1 V10 M3 6 L7 10 L11 6 M1.5 13.5 H12.5" stroke="#67c23a" stroke-width="1.2" fill="none"/></svg>
<svg class="a" style="left:1172px;top:224px" width="12" height="8" viewBox="0 0 12 8"><path d="M1 1.5 L6 6.3 L11 1.5" stroke="#a8abb2" stroke-width="1.1" fill="none"/></svg>
<svg class="a" style="left:1344px;top:642px" width="12" height="8" viewBox="0 0 12 8"><path d="M1 1.5 L6 6.3 L11 1.5" stroke="#a8abb2" stroke-width="1.1" fill="none"/></svg>
<svg class="a" style="left:1397px;top:641px" width="8" height="11" viewBox="0 0 8 11"><path d="M6 1 L1.5 5.5 L6 10" stroke="#b4b7bc" stroke-width="1" fill="none"/></svg>
<svg class="a" style="left:1477px;top:641px" width="8" height="11" viewBox="0 0 8 11"><path d="M2 1 L6.5 5.5 L2 10" stroke="#b4b7bc" stroke-width="1" fill="none"/></svg>
<svg class="a" style="left:1645px;top:543px" width="15" height="15" viewBox="0 0 24 24"><path d="M12 15a3 3 0 1 0 0-6 3 3 0 0 0 0 6Z" stroke="#fff" stroke-width="1.8" fill="none"/><path d="M19.4 15a1.65 1.65 0 0 0 .33 1.82l.06.06a2 2 0 1 1-2.83 2.83l-.06-.06a1.65 1.65 0 0 0-1.82-.33 1.65 1.65 0 0 0-1 1.51V21a2 2 0 1 1-4 0v-.09A1.65 1.65 0 0 0 9 19.4a1.65 1.65 0 0 0-1.82.33l-.06.06a2 2 0 1 1-2.83-2.83l.06-.06A1.65 1.65 0 0 0 4.68 15a1.65 1.65 0 0 0-1.51-1H3a2 2 0 1 1 0-4h.09A1.65 1.65 0 0 0 4.6 9a1.65 1.65 0 0 0-.33-1.82l-.06-.06a2 2 0 1 1 2.83-2.83l.06.06A1.65 1.65 0 0 0 9 4.68a1.65 1.65 0 0 0 1-1.51V3a2 2 0 1 1 4 0v.09a1.65 1.65 0 0 0 1 1.51 1.65 1.65 0 0 0 1.82-.33l.06-.06a2 2 0 1 1 2.83 2.83l-.06.06A1.65 1.65 0 0 0 19.4 9a1.65 1.65 0 0 0 1.51 1H21a2 2 0 1 1 0 4h-.09a1.65 1.65 0 0 0-1.51 1Z" stroke="#fff" stroke-width="1.8" fill="none"/></svg>
<div class="a" style="left:1664px;top:173px;width:6px;height:600px;background:rgba(140,140,150,0.35);border-radius:3px"></div>
<div class="a" style="left:0;top:6px;width:1px;height:764px;background:rgba(190,190,190,0.35)"></div>
<svg class="a" style="left:0;top:0" width="12" height="12"><path d="M0 0 H9 A9 9 0 0 0 0 9 Z" fill="#111"/><path d="M0.5 12 V9 A8.5 8.5 0 0 1 9 0.5" stroke="#777" stroke-width="1" fill="none"/></svg>
<div class="a" style="left:1671px;top:8px;width:1px;height:78px;background:#5e5e5e"></div><svg class="a" style="left:1660px;top:0" width="12" height="12"><path d="M12 0 H3 A9 9 0 0 1 12 9 Z" fill="#111"/><path d="M11.5 12 V9 A8.5 8.5 0 0 0 3 0.5" stroke="#777" stroke-width="1" fill="none"/></svg>
</body></html>
